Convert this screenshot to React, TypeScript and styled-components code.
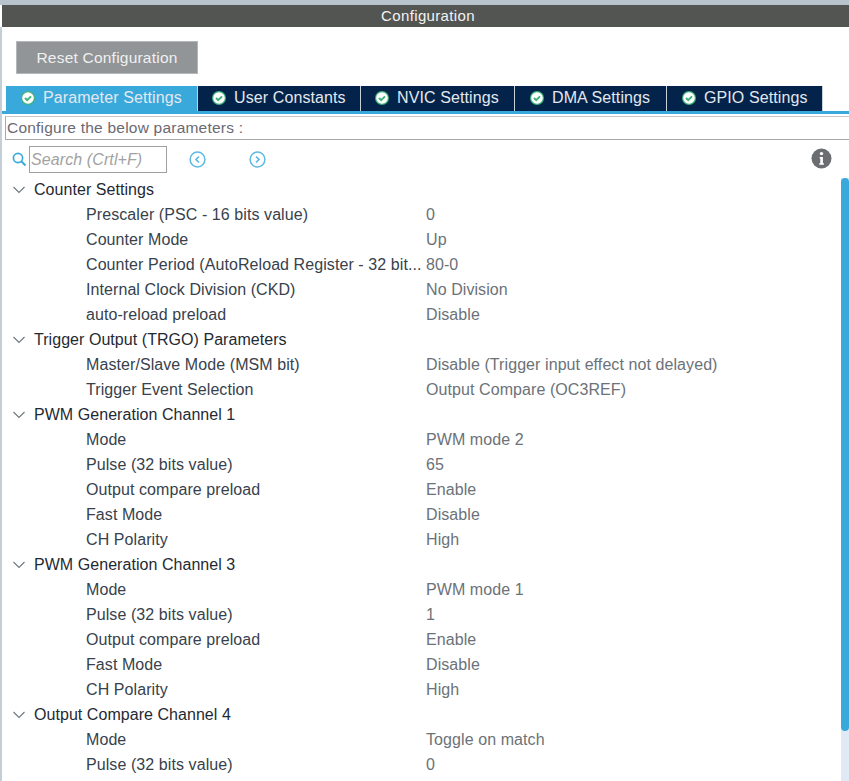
import React from 'react';
import styled, { createGlobalStyle } from 'styled-components';

const GlobalStyle = createGlobalStyle`
    html, body {
        margin: 0;
        padding: 0;
        background: #ffffff;
    }
    body {
        font-family: "Liberation Sans", Arial, sans-serif;
    }
`;

const Page = styled.div`
    width: 849px;
    height: 781px;
    overflow: hidden;
    display: flex;
    flex-direction: column;
    background: #ffffff;
    border-top: 5px solid #b8c4cc;
    box-sizing: border-box;
`;

const TitleBar = styled.div`
    height: 22px;
    margin-left: 2px;
    padding-left: 5px;
    flex: none;
    background: #535553;
    color: #f2f2f2;
    font-size: 15px;
    line-height: 21px;
    text-align: center;
    letter-spacing: 0.35px;
`;

const Body = styled.div`
    flex: 1;
    min-height: 0;
    display: flex;
    flex-direction: column;
    border-left: 2px solid #c4ced6;
`;

const ButtonRow = styled.div`
    flex: none;
    padding: 14px 0 12px 14px;
`;

const ResetButton = styled.button`
    display: block;
    width: 182px;
    height: 33px;
    padding: 0;
    background: #919598;
    border: 1px solid #b4b8bb;
    color: #f0f0f0;
    font-family: inherit;
    font-size: 15.5px;
    letter-spacing: 0.22px;
`;

const TabBar = styled.div`
    flex: none;
    display: flex;
    height: 25px;
    padding-left: 4px;
    border-bottom: 3px solid #39a9dc;
`;

const Tab = styled.div<{ $active?: boolean; $width: number; $inset: number }>`
    width: ${({ $width }) => $width}px;
    flex: none;
    box-sizing: border-box;
    display: flex;
    align-items: center;
    gap: 8px;
    padding: 0 0 1px ${({ $inset }) => $inset}px;
    background: ${({ $active }) => ($active ? '#39a9dc' : '#03234b')};
    border-right: 1px solid #c8d0d8;
    color: #e4e8ee;
    font-size: 16px;
    letter-spacing: 0.1px;
    white-space: nowrap;
`;

const ConfigureBox = styled.div`
    flex: none;
    height: 24px;
    margin: 2px 0 0 3px;
    box-sizing: border-box;
    border: 1px solid #a8a8a8;
    border-right: none;
    border-top-color: #c8c8c8;
    color: #6a6a72;
    font-size: 15.5px;
    line-height: 22px;
    padding-left: 1px;
    letter-spacing: 0.22px;
`;

const SearchRow = styled.div`
    flex: none;
    position: relative;
    display: flex;
    align-items: center;
    height: 28px;
    margin-top: 5px;
    padding-left: 10px;
`;

const SearchBox = styled.div`
    width: 138px;
    height: 27px;
    box-sizing: border-box;
    margin-left: 2px;
    border: 1px solid #a0a0a0;
    color: #a2a2a2;
    font-size: 16px;
    font-style: italic;
    line-height: 25px;
    padding-left: 1px;
    letter-spacing: 0.1px;
    white-space: nowrap;
`;

const NavIcon = styled.svg<{ $gap: number }>`
    margin-left: ${({ $gap }) => $gap}px;
    flex: none;
`;

const InfoIcon = styled.svg`
    position: absolute;
    right: 17px;
    top: 3px;
`;

const Content = styled.div`
    flex: 1;
    min-height: 0;
    display: flex;
    margin-top: 5px;
`;

const Tree = styled.div`
    flex: 1;
    min-width: 0;
    overflow: hidden;
`;

const GroupRow = styled.div`
    display: flex;
    align-items: center;
    box-sizing: border-box;
    height: 25px;
    padding: 0 0 1px 10px;
    gap: 8px;
    color: #1f2a33;
    font-size: 16px;
    letter-spacing: 0.05px;
    white-space: nowrap;
`;

const ParamRow = styled.div`
    display: flex;
    align-items: center;
    box-sizing: border-box;
    height: 25px;
    padding: 0 0 1px 84px;
    font-size: 16px;
    letter-spacing: 0.08px;
    white-space: nowrap;
`;

const ParamName = styled.span`
    width: 340px;
    flex: none;
    color: #38424c;
`;

const ParamValue = styled.span`
    color: #6c7278;
`;

const ScrollTrack = styled.div`
    width: 8px;
    flex: none;
    background: #dfeaf6;
`;

const ScrollThumb = styled.div`
    height: 553px;
    background: #39a9dc;
    border-radius: 4px;
`;

const CheckIcon = () => (
    <svg width="14" height="14" viewBox="0 0 14 14">
        <circle cx="7" cy="7" r="7" fill="#3fb37a" />
        <circle cx="7" cy="7" r="5.8" fill="#ffffff" />
        <path d="M4 7l2.200 2.200L10 5.400" fill="none" stroke="#3fb37a" strokeWidth="2" />
    </svg>
);

const Chevron = () => (
    <svg width="14" height="14" viewBox="0 0 14 14">
        <path d="M1.500 4l5.500 5.500L12.500 4" fill="none" stroke="#6e767c" strokeWidth="1.1" />
    </svg>
);

const tabs = [
    { label: 'Parameter Settings', width: 192, inset: 15, active: true },
    { label: 'User Constants', width: 163, inset: 14 },
    { label: 'NVIC Settings', width: 154, inset: 14 },
    { label: 'DMA Settings', width: 152, inset: 15 },
    { label: 'GPIO Settings', width: 156, inset: 15 },
];

const groups: { title: string; params: [string, string][] }[] = [
    {
        title: 'Counter Settings',
        params: [
            ['Prescaler (PSC - 16 bits value)', '0'],
            ['Counter Mode', 'Up'],
            ['Counter Period (AutoReload Register - 32 bit...', '80-0'],
            ['Internal Clock Division (CKD)', 'No Division'],
            ['auto-reload preload', 'Disable'],
        ],
    },
    {
        title: 'Trigger Output (TRGO) Parameters',
        params: [
            ['Master/Slave Mode (MSM bit)', 'Disable (Trigger input effect not delayed)'],
            ['Trigger Event Selection', 'Output Compare (OC3REF)'],
        ],
    },
    {
        title: 'PWM Generation Channel 1',
        params: [
            ['Mode', 'PWM mode 2'],
            ['Pulse (32 bits value)', '65'],
            ['Output compare preload', 'Enable'],
            ['Fast Mode', 'Disable'],
            ['CH Polarity', 'High'],
        ],
    },
    {
        title: 'PWM Generation Channel 3',
        params: [
            ['Mode', 'PWM mode 1'],
            ['Pulse (32 bits value)', '1'],
            ['Output compare preload', 'Enable'],
            ['Fast Mode', 'Disable'],
            ['CH Polarity', 'High'],
        ],
    },
    {
        title: 'Output Compare Channel 4',
        params: [
            ['Mode', 'Toggle on match'],
            ['Pulse (32 bits value)', '0'],
        ],
    },
];

function App() {
    return (
        <Page>
            <GlobalStyle />
            <TitleBar>Configuration</TitleBar>
            <Body>
                <ButtonRow>
                    <ResetButton>Reset Configuration</ResetButton>
                </ButtonRow>
                <TabBar>
                    {tabs.map((tab) => (
                        <Tab key={tab.label} $active={tab.active} $width={tab.width} $inset={tab.inset}>
                            <CheckIcon />
                            {tab.label}
                        </Tab>
                    ))}
                </TabBar>
                <ConfigureBox>Configure the below parameters :</ConfigureBox>
                <SearchRow>
                    <svg width="15" height="15" viewBox="0 0 15 15">
                        <circle cx="6" cy="6" r="4.600" fill="none" stroke="#39a9dc" strokeWidth="1.700" />
                        <path d="M9.500 9.500l4 4" stroke="#39a9dc" strokeWidth="2" />
                    </svg>
                    <SearchBox>Search (Crtl+F)</SearchBox>
                    <NavIcon $gap={22} width="17" height="17" viewBox="0 0 17 17">
                        <circle cx="8.500" cy="8.500" r="7.400" fill="none" stroke="#5fb8e4" strokeWidth="1.500" />
                        <path d="M10 5.500l-3 3 3 3" fill="none" stroke="#5fb8e4" strokeWidth="1.700" />
                    </NavIcon>
                    <NavIcon $gap={43} width="17" height="17" viewBox="0 0 17 17">
                        <circle cx="8.500" cy="8.500" r="7.400" fill="none" stroke="#5fb8e4" strokeWidth="1.500" />
                        <path d="M7 5.500l3 3-3 3" fill="none" stroke="#5fb8e4" strokeWidth="1.700" />
                    </NavIcon>
                    <InfoIcon width="21" height="21" viewBox="0 0 21 21">
                        <circle cx="10.500" cy="10.500" r="10" fill="#6a6e70" />
                        <circle cx="10.500" cy="5.600" r="1.700" fill="#ffffff" />
                        <path d="M8.700 9h3.200v6.200h1v1.600H8.300v-1.600h1V10.500H8.700z" fill="#ffffff" />
                    </InfoIcon>
                </SearchRow>
                <Content>
                    <Tree>
                        {groups.map((group) => (
                            <React.Fragment key={group.title}>
                                <GroupRow>
                                    <Chevron />
                                    {group.title}
                                </GroupRow>
                                {group.params.map(([name, value]) => (
                                    <ParamRow key={name}>
                                        <ParamName>{name}</ParamName>
                                        <ParamValue>{value}</ParamValue>
                                    </ParamRow>
                                ))}
                            </React.Fragment>
                        ))}
                    </Tree>
                    <ScrollTrack>
                        <ScrollThumb />
                    </ScrollTrack>
                </Content>
            </Body>
        </Page>
    );
}

export default App;
